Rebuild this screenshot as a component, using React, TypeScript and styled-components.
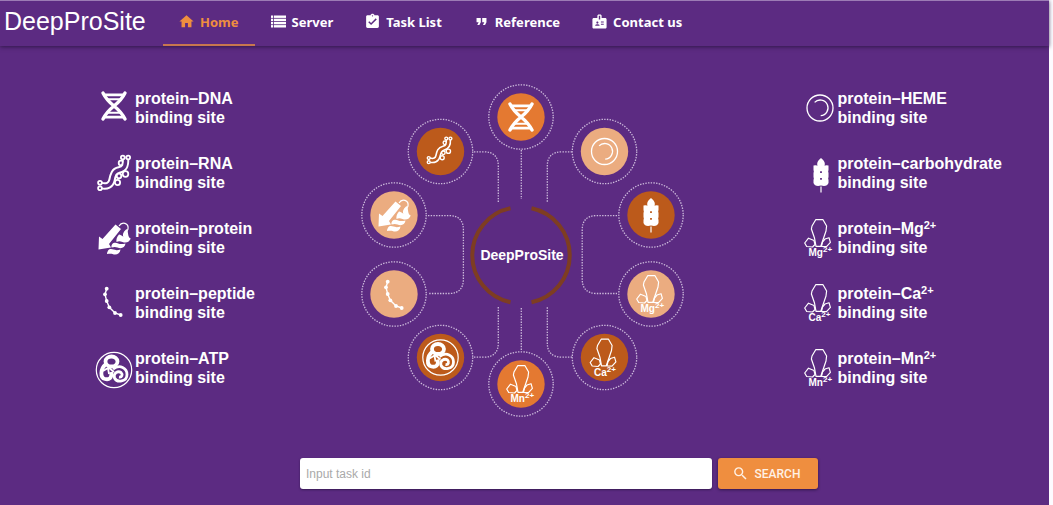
import React from 'react';
import styled, { createGlobalStyle } from 'styled-components';
import { MdHome, MdAssignmentTurnedIn, MdFormatQuote, MdBadge, MdSearch } from 'react-icons/md';

const colors = {
  page: '#5c2b82',
  accent: '#ef8e3f',
  orange: '#e47931',
  rust: '#bc5a1b',
  peach: '#ebac80',
  arc: '#7e3d22',
  dots: '#cdbbdc',
};

const sans = "'Liberation Sans', Arial, sans-serif";

const GlobalStyle = createGlobalStyle`
  * { box-sizing: border-box; }
  body { margin: 0; background: #fdfbff; font-family: ${sans}; }
`;

const Page = styled.div`
  min-height: 100vh;
  margin-right: 4px;
  background: ${colors.page};
  color: #fff;
  display: flex;
  flex-direction: column;
`;

const Header = styled.header`
  display: flex;
  height: 46px;
  border-top: 1px solid #9c7cb5;
  box-shadow: 0 1px 4px rgba(30, 15, 50, 0.7);
`;

const Brand = styled.h1`
  margin: 0;
  padding-left: 4px;
  width: 163px;
  font-size: 25px;
  font-weight: 400;
  line-height: 41px;
`;

const Nav = styled.nav`
  display: flex;
`;

const NavLink = styled.a<{ $active?: boolean }>`
  display: flex;
  align-items: center;
  gap: 5px;
  padding: 0 16px 2px 15px;
  border-bottom: 2px solid ${(p) => (p.$active ? '#c8774f' : 'transparent')};
  color: ${(p) => (p.$active ? colors.accent : '#fff')};
  font-family: 'Noto Sans', sans-serif;
  font-size: 13px;
  font-weight: 700;
  text-decoration: none;
  white-space: nowrap;

  svg {
    width: 17px;
    height: 17px;
    flex: none;
  }
`;

const Main = styled.main`
  flex: 1;
  padding: 36px 0 16px;
`;

const Overview = styled.section`
  display: grid;
  grid-template-columns: 1fr 324px 1fr;
  align-items: start;
  padding-right: 5px;
`;

const SiteList = styled.ul<{ $side: 'left' | 'right' }>`
  list-style: none;
  margin: 7px 0 0;
  padding: ${(p) => (p.$side === 'left' ? '0 0 0 93px' : '0 42px 0 0')};
  justify-self: ${(p) => (p.$side === 'left' ? 'start' : 'end')};
  display: flex;
  flex-direction: column;
  gap: 27px;
`;

const SiteItem = styled.li`
  display: flex;
  align-items: center;
  font-size: 16px;
  font-weight: 700;
  line-height: 19px;
  white-space: nowrap;

  svg {
    overflow: visible;
    flex: none;
  }

  sup {
    font-size: 11px;
    line-height: 0;
    vertical-align: 5px;
  }
`;

const Diagram = styled.svg`
  display: block;
  width: 100%;
  height: auto;
  font-family: ${sans};
  font-weight: 700;
`;

const SearchForm = styled.form`
  display: flex;
  gap: 6px;
  margin: 40px 0 0 300px;
`;

const TaskInput = styled.input`
  flex: 0 1 412px;
  min-width: 0;
  height: 31px;
  padding: 0 6px;
  border: 0;
  border-radius: 3px;
  background: #fff;
  box-shadow: 0 1px 2px rgba(20, 10, 40, 0.5);
  font-family: ${sans};
  font-size: 12px;

  &::placeholder {
    color: #a9a9a9;
    opacity: 1;
  }
`;

const SearchButton = styled.button`
  display: flex;
  align-items: center;
  justify-content: center;
  gap: 6px;
  width: 100px;
  height: 31px;
  padding: 0 4px 0 0;
  border: 0;
  border-radius: 3px;
  background: ${colors.accent};
  box-shadow: 0 1px 3px rgba(20, 10, 40, 0.6);
  color: #fff1e4;
  font-family: Roboto, ${sans};
  font-size: 12px;
  font-weight: 500;
`;

/* Every glyph is drawn around the origin so lists and badges can share it. */

const ServerIcon = () => (
  <svg viewBox="-1 -.5 17 17" fill="currentColor" aria-hidden="true">
    {[2, 5.2, 8.4, 11.6].map((y) => (
      <React.Fragment key={y}>
        <rect x="0" y={y} width="2.2" height="2.4" />
        <rect x="3" y={y} width="12" height="2.4" />
      </React.Fragment>
    ))}
  </svg>
);

const Dna = () => (
  <g fill="none" stroke="#fff" strokeLinecap="round">
    <path strokeWidth="3.4" d="M-11-13Q-7.500-6 0 0Q7.500 6 11 13M11-13Q7.500-6 0 0Q-7.500 6-11 13" />
    <path strokeWidth="2.8" d="M-9.500-11.200H9.500M-9.500 11.200H9.500" />
    <path strokeWidth="2" d="M-6.500-6.800H6.500M-6.500 6.800H6.500" />
  </g>
);

const Rna = ({ ground = colors.page }: { ground?: string }) => {
  const tube = 'M-13 12.500C-7 14-3 12-2 7C-1 2 0-2 5-3C11-4 12-8 11.500-15';
  return (
    <g fill="none" stroke="#fff" strokeWidth="1.8">
      <circle cx="3.500" cy="9.500" r="2.600" />
      <circle cx="5" cy="3" r="2.300" />
      <circle cx="11.500" cy="1" r="2.800" />
      <circle cx="7" cy="-10" r="2.300" />
      <path d={tube} strokeWidth="7.4" />
      <path d={tube} stroke={ground} strokeWidth="3.4" />
      <g fill={ground}>
        <circle cx="-14" cy="9.800" r="1.900" />
        <circle cx="-14" cy="15.200" r="1.900" />
        <circle cx="8.800" cy="-15.500" r="1.900" />
        <circle cx="14.200" cy="-15.500" r="1.900" />
      </g>
    </g>
  );
};

const Protein = () => (
  <g>
    <path fill="#fff" d="M1.500-13.500L7-9L-5 6L-3 9.500L-15.500 11.500L-15-1.500L-11.500 1Z" />
    <path fill="none" stroke="#fff" strokeWidth="1.2" d="M5-12C8-17 15-15 14-9L12.500-6" />
    <g fill="#fff">
      <path d="M12.500-9C15-6 13-2 16.500 1C15.500 3 12 2 10 0C8-3 9-6 12.500-9Z" />
      <path d="M5-3.500C8-3 9 0 16.500 0C16 4 12 5.500 8.500 4C6 3 4.500 3 2.500 4C2 1 3-1 5-3.500Z" />
      <path d="M-.500 5C4 3.500 4 7.500 11.500 5.500C11 10 7 11 3.500 9.500C1 8.500-.500 9-2.500 9.500C-3 7.500-2 6-.500 5Z" />
      <path d="M-5 11.500C-1 10 0 13.500 6.500 11.500C6 16 2 17.500-1.500 16C-3.500 15.500-5 16-7 16C-7 14-6 12.500-5 11.500Z" />
    </g>
  </g>
);

const peptidePoints = [
  [-6.3, -12.3],
  [-8, -6.7],
  [-6.3, 0],
  [-3.7, 6.3],
  [2, 12],
  [7.7, 14],
];

const Peptide = () => (
  <g fill="#fff">
    <polyline
      points={peptidePoints.map((p) => p.join(',')).join(' ')}
      fill="none"
      stroke="#fff"
      strokeWidth="1.4"
    />
    {peptidePoints.map(([x, y]) => (
      <circle key={y} cx={x} cy={y} r="1.9" />
    ))}
  </g>
);

const Atp = () => (
  <g fill="none" stroke="#fff">
    <circle r="17.7" strokeWidth="1.2" />
    <ellipse cx="-2.500" cy="-8.500" rx="6" ry="5" strokeWidth="3.8" />
    <path strokeWidth="3.8" d="M-8-6C-14-1-14 8-9 9C-5 10-1.500 8-3 2" />
    <path strokeWidth="1.800" d="M-11 1L-6-2L-5 4M-6-3L0 2" />
    <path strokeWidth="2.8" d="M-1-1C6-6 13-2 13 4.500C13 12 3 13 .500 8C-1 3 4 .500 7 2.500C9 4.500 8 7.500 5 7" />
  </g>
);

const Heme = () => (
  <g fill="none" stroke="#fff" strokeWidth="1.3">
    <circle r="13" />
    <path d="M-5.400-5.600A7.800 7.800 0 1 1 .700 7.600" />
  </g>
);

const Wheat = () => (
  <g fill="#fff">
    <path d="M0-17C5-13 4-10 3-8H-3C-4-10-5-13 0-17Z" />
    <path
      fillRule="evenodd"
      d="M-7.500-9.500Q-4-10.500 0-8Q4-10.500 7.500-9.500V-5Q6.800-3.500 7.500-2V2Q6.800 3.500 7.500 5V8Q6 12 0 10.500Q-6 12-7.500 8V5Q-6.800 3.500-7.500 2V-2Q-6.800-3.500-7.500-5ZM-.900-3.800h1.800v1.800h-1.800zM-.900 3h1.800v1.800h-1.800z"
    />
    <rect x="-.6" y="11.500" width="1.2" height="6" />
  </g>
);

const Ion = ({ name }: { name: string }) => (
  <g>
    <g fill="none" stroke="#fff" strokeWidth="1.2" strokeLinejoin="round">
      <path d="M-3.300-18.300H4L7.600-12L7-7L1.800 8.300H-3L-4.500 0L-7.600-9L-7-12Z" />
      <path d="M-10.500.200L-14.300 5L-12.300 8.500L-6.500 9L-4 6.500L-5 2.500Z" />
      <path d="M10-.300L11.400 4.300L7.500 8.700L2.500 8.300L3.500 4L6 1Z" />
    </g>
    <text x="-10.5" y="18" fill="#fff" fontSize="10">
      {name}
      <tspan dy="-4" fontSize="8">2+</tspan>
    </text>
  </g>
);

type Site = { key: string; label: React.ReactNode; icon: React.ReactNode };

const ionSite = (name: string): Site => ({
  key: name,
  label: (
    <>
      protein–{name}
      <sup>2+</sup>
    </>
  ),
  icon: (
    <g transform="translate(-2 0)">
      <Ion name={name} />
    </g>
  ),
});

const leftSites: Site[] = [
  { key: 'dna', label: 'protein–DNA', icon: <g transform="translate(0 -2)"><Dna /></g> },
  { key: 'rna', label: 'protein–RNA', icon: <Rna /> },
  { key: 'protein', label: 'protein–protein', icon: <Protein /> },
  { key: 'peptide', label: 'protein–peptide', icon: <g transform="translate(-1 -2)"><Peptide /></g> },
  { key: 'atp', label: 'protein–ATP', icon: <g transform="translate(0 2)"><Atp /></g> },
];

const rightSites: Site[] = [
  { key: 'heme', label: 'protein–HEME', icon: <g transform="translate(-1 0)"><Heme /></g> },
  { key: 'carb', label: 'protein–carbohydrate', icon: <g transform="translate(0 2)"><Wheat /></g> },
  ionSite('Mg'),
  ionSite('Ca'),
  ionSite('Mn'),
];

const badges = [
  { x: 161, y: 35, fill: colors.orange, icon: <Dna /> },
  { x: 244.5, y: 69.5, fill: colors.peach, icon: <Heme /> },
  { x: 291, y: 133, fill: colors.rust, icon: <Wheat /> },
  { x: 291, y: 212, fill: colors.peach, icon: <Ion name="Mg" /> },
  { x: 244.5, y: 275.5, fill: colors.rust, icon: <Ion name="Ca" /> },
  { x: 161, y: 302, fill: colors.orange, icon: <Ion name="Mn" /> },
  { x: 80.5, y: 275.5, fill: colors.rust, icon: <Atp /> },
  { x: 34, y: 212, fill: colors.peach, icon: <Peptide /> },
  { x: 34, y: 133, fill: colors.peach, icon: <Protein /> },
  {
    x: 80.5,
    y: 69.5,
    fill: colors.rust,
    icon: (
      <g transform="translate(-1 -1) scale(.77)">
        <Rna ground={colors.rust} />
      </g>
    ),
  },
];

const Sites = ({ side, sites }: { side: 'left' | 'right'; sites: Site[] }) => {
  const iconWidth = side === 'left' ? 42 : 34;
  return (
    <SiteList $side={side}>
      {sites.map((site) => (
        <SiteItem key={site.key}>
          <svg
            width={iconWidth}
            height="38"
            viewBox={`${-iconWidth / 2} -19 ${iconWidth} 38`}
            aria-hidden="true"
          >
            {site.icon}
          </svg>
          <span>
            {site.label}
            <br />
            binding site
          </span>
        </SiteItem>
      ))}
    </SiteList>
  );
};

const SiteDiagram = () => (
  <Diagram viewBox="0 0 324 336" role="img" aria-label="DeepProSite binding site types">
    <g fill="none" stroke={colors.dots} strokeWidth="1.3" strokeDasharray="1.4 1.3">
      <path d="M161.300 68V117M161.300 226V269" />
      <path d="M114 69.800H124Q138.300 70 138.300 84V120" />
      <path d="M212 69.800H202Q187.300 70 187.300 84V120" />
      <path d="M114 275.200H124Q138.300 275 138.300 261V225" />
      <path d="M212 275.200H202Q187.300 275 187.300 261V225" />
      <path d="M68 133.600H90Q103.400 134 103.400 148V197Q103.400 211 90 211.500H68" />
      <path d="M257 133.600H236Q222.200 134 222.200 148V197Q222.200 211 236 211.500H257" />
      {badges.map((b) => (
        <circle key={`${b.x}-${b.y}`} cx={b.x} cy={b.y} r="32.2" />
      ))}
    </g>
    {badges.map((b) => (
      <g key={`${b.x}-${b.y}`} transform={`translate(${b.x} ${b.y})`}>
        <circle r="23.7" fill={b.fill} />
        {b.icon}
      </g>
    ))}
    <g fill="none" stroke={colors.arc} strokeWidth="4">
      <path d="M150.500 126.200A48 48 0 0 0 150.500 220.200" />
      <path d="M171.500 126.200A48 48 0 0 1 171.500 220.200" />
    </g>
    <text x="162" y="178" fill="#fff" fontSize="14" textAnchor="middle">
      DeepProSite
    </text>
  </Diagram>
);

export default function App() {
  return (
    <Page>
      <GlobalStyle />
      <Header>
        <Brand>DeepProSite</Brand>
        <Nav aria-label="Main">
          <NavLink href="#home" $active aria-current="page">
            <MdHome />
            Home
          </NavLink>
          <NavLink href="#server">
            <ServerIcon />
            Server
          </NavLink>
          <NavLink href="#tasks">
            <MdAssignmentTurnedIn />
            Task List
          </NavLink>
          <NavLink href="#reference">
            <MdFormatQuote />
            Reference
          </NavLink>
          <NavLink href="#contact">
            <MdBadge />
            Contact us
          </NavLink>
        </Nav>
      </Header>
      <Main>
        <Overview>
          <Sites side="left" sites={leftSites} />
          <SiteDiagram />
          <Sites side="right" sites={rightSites} />
        </Overview>
        <SearchForm onSubmit={(e) => e.preventDefault()}>
          <TaskInput type="text" placeholder="Input task id" aria-label="Input task id" />
          <SearchButton type="submit">
            <MdSearch size={17} />
            SEARCH
          </SearchButton>
        </SearchForm>
      </Main>
    </Page>
  );
}
